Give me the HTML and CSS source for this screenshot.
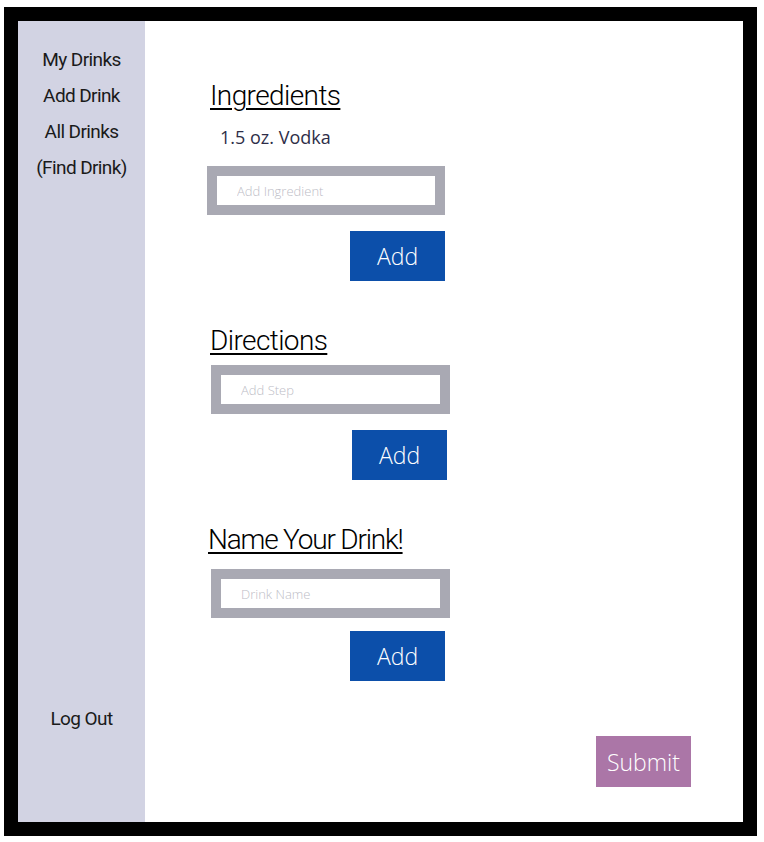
FILE: index.html
```html
<!DOCTYPE html>
<html>
<head>
<meta charset="utf-8">
<link rel="stylesheet" href="styles.css">
</head>
<body>
<div class="frame">
  <aside class="sidebar">
    <nav class="nav">
      <a class="nav-item">My Drinks</a>
      <a class="nav-item">Add Drink</a>
      <a class="nav-item">All Drinks</a>
      <a class="nav-item">(Find Drink)</a>
    </nav>
    <a class="nav-item">Log Out</a>
  </aside>
  <main class="main">
    <section class="section sec-ingredients">
      <h2 class="heading">Ingredients</h2>
      <div class="item">1.5 oz. Vodka</div>
      <div class="field-wrap">
        <input class="field" type="text" placeholder="Add Ingredient">
        <button class="btn btn-add">Add</button>
      </div>
    </section>
    <section class="section sec-directions">
      <h2 class="heading">Directions</h2>
      <div class="field-wrap shift">
        <input class="field" type="text" placeholder="Add Step">
        <button class="btn btn-add btn-step">Add</button>
      </div>
    </section>
    <section class="section sec-name">
      <h2 class="heading heading-name">Name Your Drink!</h2>
      <div class="field-wrap shift">
        <input class="field" type="text" placeholder="Drink Name">
        <button class="btn btn-add btn-name">Add</button>
      </div>
    </section>
    <div class="submit-row">
      <button class="btn btn-submit">Submit</button>
    </div>
  </main>
</div>
</body>
</html>
```

FILE: styles.css
```css
* { box-sizing: border-box; }
html, body { margin: 0; padding: 0; background: #ffffff; }
body { width: 764px; height: 842px; padding: 7px 0 0 4px; }

.frame {
  width: 753px;
  height: 829px;
  border: 14px solid #000;
  display: flex;
  background: #fff;
}

.sidebar {
  flex: 0 0 127px;
  width: 127px;
  background: #d2d3e3;
  display: flex;
  flex-direction: column;
  justify-content: space-between;
  align-items: center;
  padding: 21px 0 85px;
}
.nav { display: flex; flex-direction: column; align-items: center; }
.nav-item {
  font-family: Roboto, "Liberation Sans", sans-serif;
  font-size: 19px;
  letter-spacing: -0.6px;
  line-height: 36px;
  color: #1a1a1a;
  text-decoration: none;
  white-space: nowrap;
}

.main {
  flex: 1;
  min-width: 0;
  padding: 58px 0 0 62px;
  display: flex;
  flex-direction: column;
}

.heading {
  margin: 0;
  font-family: Roboto, "Liberation Sans", sans-serif;
  font-weight: 300;
  font-size: 28px;
  letter-spacing: -0.6px;
  line-height: 34px;
  color: #000;
  text-decoration: underline;
  text-decoration-thickness: 2px;
  text-underline-offset: 3px;
  padding-left: 3px;
  white-space: nowrap;
}
.heading-name { padding-left: 1px; letter-spacing: -1.2px; }

.item {
  font-family: "Open Sans", sans-serif;
  font-size: 18px;
  line-height: 24px;
  color: #2e2e48;
  padding-left: 13px;
  margin-top: 12px;
}

.field-wrap {
  width: 238px;
  display: flex;
  flex-direction: column;
  align-items: flex-end;
}
.shift { margin-left: 4px; width: 239px; }

.field {
  width: 100%;
  height: 49px;
  border: 10px solid #a9a9b3;
  outline: none;
  padding: 0 0 0 20px;
  font-family: "Open Sans", sans-serif;
  font-weight: 300;
  font-size: 13px;
  background: #fff;
}
.field::placeholder { color: #bdbdc6; }

.btn {
  border: none;
  color: #fff;
  font-family: "Open Sans", sans-serif;
  font-weight: 300;
  font-size: 23px;
  width: 95px;
  height: 50px;
  padding: 0;
}
.btn-add { background: #0c4faa; margin-top: 16px; }
.btn-step { margin-right: 3px; }
.btn-name { margin-right: 5px; margin-top: 13px; }

.sec-ingredients .field { margin-top: 17px; }
.sec-directions { margin-top: 43px; }
.sec-directions .field { margin-top: 7px; }
.sec-name { margin-top: 43px; }
.sec-name .field { margin-top: 12px; }

.submit-row {
  margin-top: 55px;
  padding-left: 389px;
}
.btn-submit { background: #ab76a7; height: 51px; }
```
